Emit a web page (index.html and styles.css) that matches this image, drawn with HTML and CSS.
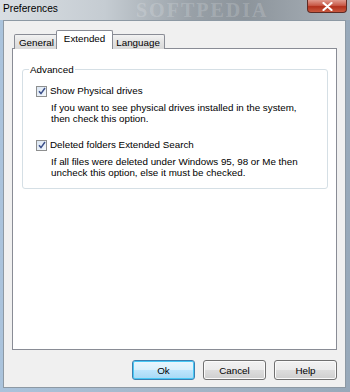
FILE: index.html
```html
<!DOCTYPE html>
<html lang="en">
<head>
  <meta charset="UTF-8">
  <title>Preferences</title>
  <link rel="stylesheet" href="styles.css">
</head>
<body>
  <div class="window">
    <div class="titlebar">
      <span class="title">Preferences</span>
      <span class="watermark">SOFTPEDIA</span>
      <div class="close">
        <svg width="11" height="9" viewBox="0 0 11 9">
          <path d="M1.5 1 L9.5 8 M9.5 1 L1.5 8" stroke="#fff" stroke-width="2.2" stroke-linecap="round"/>
        </svg>
      </div>
    </div>

    <div class="client">
      <div class="tabs">
        <div class="tab">General</div>
        <div class="tab active">Extended</div>
        <div class="tab">Language</div>
      </div>

      <div class="panel">
        <fieldset class="group">
          <legend>Advanced</legend>

          <div class="option">
            <div class="check">
              <span class="box">
                <svg width="8" height="8" viewBox="0 0 8 8">
                  <path d="M1 4.2 L3 6.6 L7 1" fill="none" stroke="#3b4f8a" stroke-width="1.5"/>
                </svg>
              </span>
              Show Physical drives
            </div>
            <p class="desc">
              If you want to see physical drives installed in the system,<br>
              then check this option.
            </p>
          </div>

          <div class="option">
            <div class="check">
              <span class="box">
                <svg width="8" height="8" viewBox="0 0 8 8">
                  <path d="M1 4.2 L3 6.6 L7 1" fill="none" stroke="#3b4f8a" stroke-width="1.5"/>
                </svg>
              </span>
              Deleted folders Extended Search
            </div>
            <p class="desc">
              If all files were deleted under Windows 95, 98 or Me then<br>
              uncheck this option, else it must be checked.
            </p>
          </div>
        </fieldset>
      </div>

      <div class="buttons">
        <button class="btn default">Ok</button>
        <button class="btn">Cancel</button>
        <button class="btn">Help</button>
      </div>
    </div>
  </div>
</body>
</html>
```

FILE: styles.css
```css
body {
  margin: 0;
  font-family: 'Liberation Sans', Arial, sans-serif;
  font-size: 9.8px;
  color: #000;
  background: #3a4148;
}
.window {
  width: 350px;
  height: 392px;
  display: flex;
  flex-direction: column;
  background: linear-gradient(to right, #aac3dc 0%, #a4b6c8 50%, #98a9ba 100%);
  box-sizing: border-box;
  padding: 0 4px 4px 3px;
}
.titlebar {
  position: relative;
  height: 20px;
  display: flex;
  align-items: flex-start;
  margin: 0 -4px 0 -3px;
  padding-left: 3px;
  background: linear-gradient(to right, #d9dee3 0%, #c5ccd2 30%, #98a0a7 55%, #8c949b 70%, #aab2ba 100%);
}
.title {
  font-size: 10.2px;
  line-height: 17px;
  color: #000;
}
.watermark {
  position: absolute;
  left: 136px;
  top: 0;
  font-family: 'Liberation Serif', serif;
  font-size: 20px;
  line-height: 20px;
  font-weight: bold;
  letter-spacing: 2px;
  color: rgba(255,255,255,0.18);
}
.close {
  margin-left: auto;
  margin-right: 3px;
  width: 40px;
  height: 13px;
  box-sizing: border-box;
  border: 1px solid #5e2b25;
  border-top: 0;
  border-radius: 0 0 4px 4px;
  background: linear-gradient(#e09a8e 0%, #c95a48 45%, #b2301c 55%, #c95a40 100%);
  display: flex;
  align-items: center;
  justify-content: center;
}
.client {
  flex: 1;
  display: flex;
  flex-direction: column;
  background: #f0f0f0;
  border: 1px solid #8d99a4;
  padding: 10px 8px 7px 8px;
}
.tabs {
  display: flex;
  align-items: flex-end;
  height: 18px;
  margin-bottom: -1px;
  padding-left: 2px;
  position: relative;
  z-index: 1;
}
.tab {
  height: 15px;
  box-sizing: border-box;
  padding: 0 4px;
  line-height: 15px;
  border: 1px solid #898c95;
  border-bottom: 0;
  border-radius: 2px 2px 0 0;
  background: linear-gradient(#f2f2f2, #e3e3e3 50%, #d9d9d9);
  margin-right: -1px;
}
.tab.active {
  height: 19px;
  line-height: 16px;
  padding: 0 7px;
  margin: 0 -2px;
  background: #fff;
  position: relative;
  z-index: 2;
}
.panel {
  flex: 1;
  background: #fff;
  border: 1px solid #898c95;
  padding: 14px 8px 0 9px;
}
.group {
  margin: 0;
  border: 1px solid #d5dfe5;
  border-radius: 3px;
  padding: 9px 6px 10px 6px;
}
.group legend {
  padding: 0 1px;
  line-height: 13px;
}
.option {
  padding-left: 7px;
}
.option + .option {
  margin-top: 15px;
}
.check {
  display: flex;
  align-items: center;
  gap: 3px;
  line-height: 12px;
  height: 12px;
}
.box {
  width: 11px;
  height: 11px;
  box-sizing: border-box;
  border: 1px solid #8e8f8f;
  background: linear-gradient(135deg, #dbe6f3, #f4f8fc);
  display: flex;
  align-items: center;
  justify-content: center;
}
.desc {
  margin: 5px 0 0 15px;
  line-height: 11px;
}
.buttons {
  display: flex;
  justify-content: flex-end;
  gap: 8px;
  margin-top: 10px;
}
.btn {
  width: 63px;
  height: 20px;
  padding: 0;
  font-family: 'Liberation Sans', Arial, sans-serif;
  font-size: 9.8px;
  color: #000;
  border: 1px solid #707070;
  border-radius: 3px;
  background: linear-gradient(#f2f2f2 0%, #ebebeb 50%, #dddddd 51%, #cfcfcf 100%);
  box-shadow: inset 0 0 0 1px #fbfbfb;
}
.btn.default {
  border-color: #3c7fb1;
  background: linear-gradient(#eaf6fd 0%, #d9f0fc 50%, #bee6fd 51%, #a7d9f5 100%);
  box-shadow: inset 0 0 0 1px #48c8f5;
}
```
